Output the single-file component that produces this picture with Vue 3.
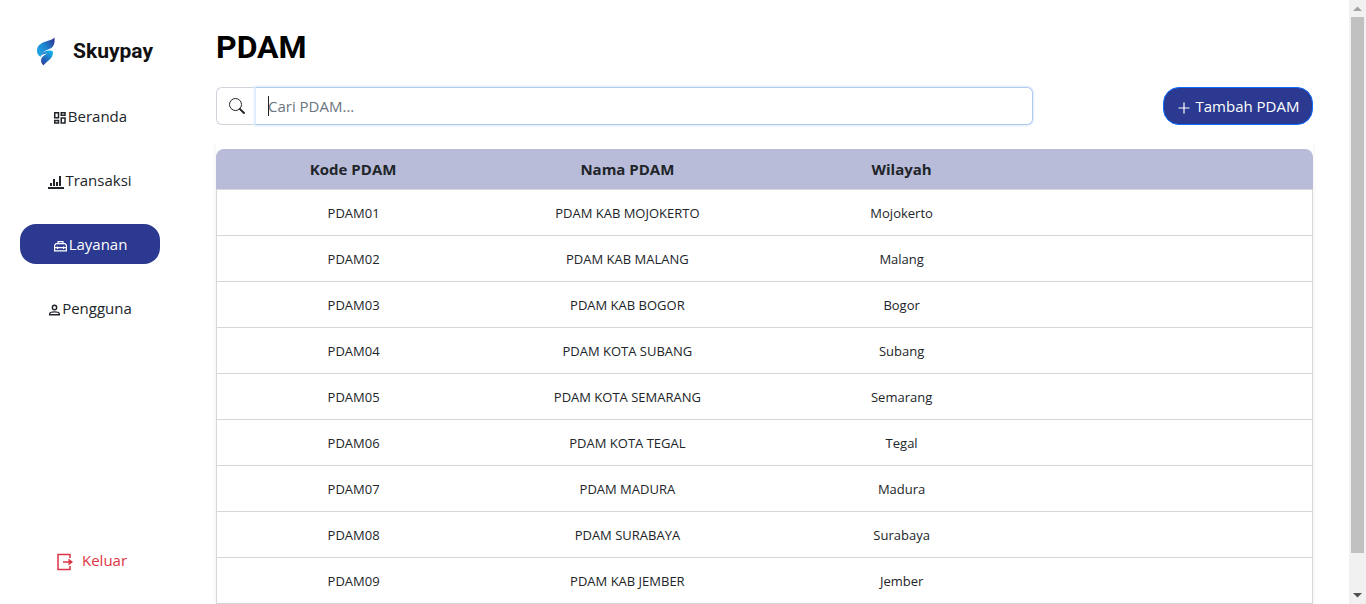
<script setup>
import { ref } from 'vue'

const search = ref('')
const menu = [
  { label: 'Beranda', icon: 'grid' },
  { label: 'Transaksi', icon: 'chart' },
  { label: 'Layanan', icon: 'toolbox', active: true },
  { label: 'Pengguna', icon: 'user' }
]
const rows = [
  ['PDAM01', 'PDAM KAB MOJOKERTO', 'Mojokerto'],
  ['PDAM02', 'PDAM KAB MALANG', 'Malang'],
  ['PDAM03', 'PDAM KAB BOGOR', 'Bogor'],
  ['PDAM04', 'PDAM KOTA SUBANG', 'Subang'],
  ['PDAM05', 'PDAM KOTA SEMARANG', 'Semarang'],
  ['PDAM06', 'PDAM KOTA TEGAL', 'Tegal'],
  ['PDAM07', 'PDAM MADURA', 'Madura'],
  ['PDAM08', 'PDAM SURABAYA', 'Surabaya'],
  ['PDAM09', 'PDAM KAB JEMBER', 'Jember']
]
</script>

<template>
  <div class="shell">
    <aside class="sidebar">
      <div class="brand">
        <svg class="brand-mark" width="20" height="30" viewBox="0 0 20 30" aria-hidden="true">
          <defs>
            <linearGradient id="wing" x1="0" y1="0.8" x2="1" y2="0.1">
              <stop offset="0" stop-color="#1fa9e8" />
              <stop offset="0.5" stop-color="#2083cc" />
              <stop offset="1" stop-color="#2e3192" />
            </linearGradient>
            <linearGradient id="tail" x1="0.2" y1="1" x2="0.8" y2="0">
              <stop offset="0" stop-color="#2b3f9f" />
              <stop offset="0.5" stop-color="#2075c4" />
              <stop offset="1" stop-color="#12b5ee" />
            </linearGradient>
          </defs>
          <path d="M18.500 1.500C19 7 18 10.500 14.500 12.500C11 14.300 6.500 14.500 4.500 21C2 19 1 17.500 1 14.500C1 9.500 5 7 10 5.500C14 4.200 17 3.500 18.500 1.500Z" fill="url(#wing)" />
          <path d="M9.500 15.200C12 14.200 16 14.400 17 15.800C17 20 15.500 22 12.500 24.500C10.500 26.200 9 27.500 7.500 29.500C5 27 4.500 24.500 5.500 22.200C6.500 20 9.500 19 11 17.500C8.500 17.800 6.500 18.300 5 19.800C5.500 17.500 7 16 9.500 15.200Z" fill="url(#tail)" />
        </svg>
        <span>Skuypay</span>
      </div>
      <nav class="menu">
        <a v-for="item in menu" :key="item.label" href="#" :class="['item', { active: item.active }]">
          <svg v-if="item.icon === 'grid'" width="14" height="14" viewBox="0 0 14 14" fill="none" stroke="currentColor" stroke-width="1.500" aria-hidden="true">
            <path d="M1.750 1.750h3.750v5H1.750zM8.250 1.750H12v2.500H8.250zM1.750 9.500h3.750V12H1.750zM8.250 7H12v5H8.250z" />
          </svg>
          <svg v-else-if="item.icon === 'chart'" width="16" height="16" viewBox="0 0 16 16" fill="currentColor" aria-hidden="true">
            <path d="M0 13h16v2H0zM2 9h2v3H2zM5 5h2v7H5zM8 8h2v4H8zM11 2h2v10h-2z" />
          </svg>
          <svg v-else-if="item.icon === 'toolbox'" width="15" height="14" viewBox="0 0 15 14" fill="none" stroke="currentColor" stroke-width="1.200" aria-hidden="true">
            <path d="M5 4.500V2.600h5v1.900M1.600 8.500V6.300L3 4.600h9l1.400 1.700v2.200M1 8.600h13M1.600 8.500v3.400h11.800V8.500M4.500 7.400v2.600M10.500 7.400v2.600" />
          </svg>
          <svg v-else width="13" height="14" viewBox="0 0 13 14" fill="none" stroke="currentColor" stroke-width="1.400" aria-hidden="true">
            <circle cx="6.500" cy="4.500" r="2.200" />
            <path d="M1.700 11.800v-.8c0-1.300 2-2.100 4.800-2.100s4.800.8 4.800 2.100v.8z" />
          </svg>
          <span>{{ item.label }}</span>
        </a>
      </nav>
      <button type="button" class="logout">
        <svg width="18" height="18" viewBox="0 0 18 18" fill="none" stroke="currentColor" stroke-width="1.500" aria-hidden="true">
          <path d="M14 5V1.500H2v15h12V13M7 9h9" />
          <path d="M12.500 5.500L17 9l-4.500 3.500z" fill="currentColor" stroke="none" />
        </svg>
        <span>Keluar</span>
      </button>
    </aside>

    <main class="content">
      <h1>PDAM</h1>
      <div class="toolbar">
        <div class="search">
          <label for="search" class="search-icon" aria-label="Cari PDAM">
            <svg width="16" height="16" viewBox="0 0 16 16" fill="none" stroke="currentColor" aria-hidden="true">
              <circle cx="6.500" cy="6.500" r="6" />
              <path d="M10.800 10.800L15 15" stroke-width="1.900" stroke-linecap="round" />
            </svg>
          </label>
          <div class="field">
            <input id="search" v-model="search" type="text" placeholder="Cari PDAM..." />
            <span v-if="!search" class="caret"></span>
          </div>
        </div>
        <button type="button" class="add">
          <svg width="14" height="14" viewBox="0 0 14 14" stroke="currentColor" aria-hidden="true">
            <path d="M7 1.500v11M1.500 7h11" stroke-width="1.200" />
          </svg>
          <span>Tambah PDAM</span>
        </button>
      </div>
      <div class="card">
        <table>
          <thead>
            <tr>
              <th scope="col">Kode PDAM</th>
              <th scope="col">Nama PDAM</th>
              <th scope="col">Wilayah</th>
              <th></th>
            </tr>
          </thead>
          <tbody>
            <tr v-for="row in rows" :key="row[0]">
              <td v-for="cell in row" :key="cell">{{ cell }}</td>
              <td></td>
            </tr>
          </tbody>
        </table>
      </div>
    </main>

    <div class="scrollbar" aria-hidden="true">
      <svg width="17" height="17" viewBox="0 0 17 17"><path d="M4 11l4.500-4.500L13 11z" fill="#a3a3a3" /></svg>
      <div class="track"><div class="thumb"></div></div>
      <svg width="17" height="17" viewBox="0 0 17 17"><path d="M4 6l4.500 4.500L13 6z" fill="#505050" /></svg>
    </div>
  </div>
</template>

<style>
body {
  margin: 0;
  background: #fff;
}
</style>

<style scoped>
* {
  box-sizing: border-box;
}
.shell {
  display: flex;
  height: 100vh;
  overflow: hidden;
  font-family: "Segoe UI", "Open Sans", "Noto Sans", sans-serif;
  font-size: 15px;
  line-height: 24px;
  color: #212529;
}
button,
input {
  font: inherit;
}
.sidebar {
  flex: none;
  width: 180px;
  padding: 31px 20px 24px;
  display: flex;
  flex-direction: column;
}
.brand {
  display: flex;
  align-items: center;
  gap: 17px;
  height: 40px;
  padding-left: 16px;
  font: 700 21px/24px Roboto, sans-serif;
  color: #111;
}
.menu {
  display: flex;
  flex-direction: column;
  gap: 24px;
  margin-top: 25px;
}
.item {
  display: flex;
  align-items: center;
  justify-content: center;
  gap: 1px;
  height: 40px;
  border-radius: 16px;
  color: #212529;
  text-decoration: none;
}
.item svg {
  margin-top: 4px;
}
.item.active {
  background: #2b3990;
  color: #fff;
}
.logout {
  display: flex;
  align-items: center;
  gap: 8px;
  height: 40px;
  margin-top: auto;
  padding: 0 0 0 36px;
  border: 0;
  background: none;
  color: #dc3545;
}
.logout svg {
  margin-top: 4px;
}
.content {
  flex: 1;
  min-width: 0;
  padding: 27px 36px 0;
}
h1 {
  margin: 0 0 20px;
  font: 700 32px/40px Roboto, sans-serif;
  color: #000;
}
.toolbar {
  display: flex;
  align-items: center;
  justify-content: space-between;
}
.search {
  display: flex;
  width: 74.5%;
  height: 38px;
}
.search-icon {
  display: flex;
  align-items: center;
  width: 39px;
  padding-left: 12px;
  border: 1px solid #ced4da;
  border-right: 0;
  border-radius: 6px 0 0 6px;
}
.field {
  position: relative;
  flex: 1;
}
.field input {
  width: 100%;
  height: 38px;
  padding: 6px 12px;
  border: 1px solid #b1cbee;
  border-left-color: #deebfc;
  border-radius: 0 6px 6px 0;
  outline: 0;
  background: #fff;
  color: #212529;
  box-shadow: 0 0 2px 1px #dbe9fd;
}
.field input::placeholder {
  color: #6c757d;
  opacity: 1;
}
.caret {
  position: absolute;
  left: 13px;
  top: 9px;
  width: 1px;
  height: 20px;
  background: #212529;
}
.add {
  display: flex;
  align-items: center;
  justify-content: center;
  gap: 5px;
  width: 150px;
  height: 38px;
  padding: 0;
  border: 1px solid #0d6efd;
  border-radius: 16px;
  background: #2b3990;
  color: #fff;
}
.add svg {
  margin-top: 3px;
}
.card {
  margin-top: 16px;
  padding-top: 8px;
  box-shadow: 0 2px 4px rgba(0, 0, 0, 0.075);
}
table {
  width: 100%;
  table-layout: fixed;
  border-collapse: separate;
  border-spacing: 0;
  text-align: center;
}
th {
  height: 40px;
  padding: 0;
  background: #b8bcd9;
  font-weight: 700;
}
th:first-child {
  border-top-left-radius: 8px;
}
th:last-child {
  border-top-right-radius: 8px;
}
td {
  height: 46px;
  padding: 0;
  border-top: 1px solid #d6d7d9;
  font-size: 13px;
}
td:first-child {
  border-left: 1px solid #d6d7d9;
}
td:last-child {
  border-right: 1px solid #d6d7d9;
}
tbody tr:last-child td {
  height: 47px;
  border-bottom: 1px solid #d6d7d9;
}
.scrollbar {
  flex: none;
  display: flex;
  flex-direction: column;
  width: 17px;
  background: #f1f1f1;
}
.scrollbar svg {
  display: block;
}
.track {
  flex: 1;
  padding: 0 2px;
}
.thumb {
  height: 94%;
  background: #c1c1c1;
}
</style>
